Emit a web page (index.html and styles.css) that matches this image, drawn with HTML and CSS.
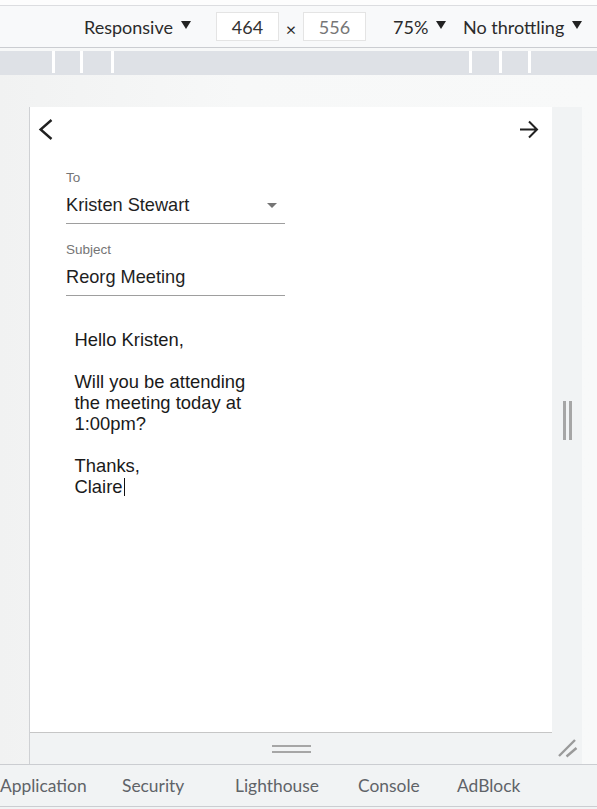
FILE: index.html
```html
<!DOCTYPE html>
<html lang="en">
<head>
<meta charset="utf-8">
<title>Device emulation</title>
<link rel="stylesheet" href="styles.css">
</head>
<body>
<div class="topline"></div>
<div class="toolbar">
  <div class="tb-item tb-mode">Responsive<span class="tri"></span></div>
  <div class="dim">464</div>
  <div class="times">×</div>
  <div class="dim dim-muted">556</div>
  <div class="tb-item tb-zoom">75%<span class="tri"></span></div>
  <div class="tb-item tb-throttle">No throttling<span class="tri"></span></div>
</div>
<div class="ruler-wrap">
  <div class="ruler">
    <span class="tick t1"></span>
    <span class="tick t2"></span>
    <span class="tick t3"></span>
    <span class="tick t4"></span>
    <span class="tick t5"></span>
    <span class="tick t6"></span>
  </div>
</div>
<div class="stage">
  <div class="frame">
    <div class="device">
      <div class="nav">
        <svg class="icon" width="24" height="24" viewBox="0 0 24 24"><polyline points="17.5,2 6.6,11.5 17.5,21" fill="none" stroke="#212121" stroke-width="2.4"/></svg>
        <svg class="icon" width="24" height="24" viewBox="0 0 24 24"><path d="M3 11.5H19.5M12 3.5L20 11.5L12 19.5" fill="none" stroke="#212121" stroke-width="2"/></svg>
      </div>
      <div class="form">
        <div class="field">
          <div class="label">To</div>
          <div class="value">Kristen Stewart<span class="select-arrow"></span></div>
        </div>
        <div class="field">
          <div class="label">Subject</div>
          <div class="value">Reorg Meeting</div>
        </div>
      </div>
      <div class="message">Hello Kristen,<br><br>Will you be attending<br>the meeting today at<br>1:00pm?<br><br>Thanks,<br>Claire<span class="caret"></span></div>
    </div>
    <div class="vstrip"><span class="grip-v"></span><span class="grip-v"></span></div>
    <div class="hstrip"><div class="grip-h-wrap"><span class="grip-h"></span><span class="grip-h"></span></div></div>
    <div class="corner">
      <svg width="30" height="31" viewBox="0 0 30 31"><path d="M7 23L23 7M14.5 23.5L24.5 15" fill="none" stroke="#9a9a9a" stroke-width="2.4"/></svg>
    </div>
  </div>
</div>
<div class="tabs">
  <div class="tab">Application</div>
  <div class="tab">Security</div>
  <div class="tab">Lighthouse</div>
  <div class="tab">Console</div>
  <div class="tab">AdBlock</div>
</div>
</body>
</html>
```
FILE: styles.css
```css
html, body {
  margin: 0;
  padding: 0;
}
body {
  width: 597px;
  height: 809px;
  overflow: hidden;
  background: #f1f3f4;
  font-family: Lato, "Open Sans", sans-serif;
}
.topline {
  height: 5px;
  background: #fdfdfd;
  border-bottom: 1px solid #dcdde0;
}
.toolbar {
  height: 41px;
  background: #f8f9fa;
  border-bottom: 1px solid #cbcdd1;
  display: flex;
  align-items: center;
  padding-left: 84px;
  font-size: 18px;
  color: #2b2b2b;
  box-sizing: content-box;
}
.tb-item {
  display: flex;
  align-items: center;
  white-space: nowrap;
}
.tb-mode { width: 132px; }
.tb-zoom { width: 70px; margin-left: 27px; }
.tri {
  display: inline-block;
  width: 0;
  height: 0;
  border-left: 5.5px solid transparent;
  border-right: 5.5px solid transparent;
  border-top: 8px solid #222;
  margin-left: 8px;
  margin-top: -3px;
}
.dim {
  width: 61px;
  height: 27px;
  background: #fff;
  border: 1px solid #e4e4e4;
  display: flex;
  align-items: center;
  justify-content: center;
  font-size: 18px;
  color: #333;
}
.dim-muted { color: #777; }
.times {
  width: 24px;
  text-align: center;
  font-size: 18px;
  padding-top: 5px;
}
.ruler-wrap {
  padding-top: 3px;
  background: #f7f8f8;
}
.ruler {
  height: 24px;
  background: #dee1e6;
  display: flex;
  align-items: flex-start;
}
.tick {
  width: 3px;
  height: 22px;
  background: #fff;
  flex: none;
}
.t1 { margin-left: 52px; }
.t2 { margin-left: 25px; }
.t3 { margin-left: 28px; }
.t4 { margin-left: 355px; }
.t5 { margin-left: 27px; }
.t6 { margin-left: 26px; }
.stage {
  height: 657px;
  padding: 32px 0 0 29px;
  background: linear-gradient(to right, #f1f2f2 0%, #f7f8f8 40%, #f8f9f9 100%);
}
.frame {
  width: 552px;
  height: 657px;
  border-left: 1px solid #cfd1d4;
  display: grid;
  grid-template-columns: 522px 30px;
  grid-template-rows: 626px 31px;
  background: #f1f3f4;
}
.device {
  background: #fff;
  border-bottom: 1px solid #c6c6c6;
  display: flex;
  flex-direction: column;
  font-family: "Liberation Sans", Arial, sans-serif;
  color: #1f1f1f;
}
.nav {
  display: flex;
  justify-content: space-between;
  padding: 11px 11px 0 4px;
  height: 24px;
}
.icon { display: block; }
.form {
  margin: 28px 0 0 36px;
  width: 219px;
  display: flex;
  flex-direction: column;
  gap: 18px;
}
.field {
  display: flex;
  flex-direction: column;
}
.label {
  font-size: 13.5px;
  line-height: 16px;
  color: #757575;
  margin-bottom: 7px;
}
.value {
  font-size: 18.2px;
  line-height: 24px;
  padding-bottom: 6px;
  border-bottom: 1px solid #9e9e9e;
  display: flex;
  justify-content: space-between;
  align-items: center;
}
.select-arrow {
  width: 0;
  height: 0;
  border-left: 5px solid transparent;
  border-right: 5px solid transparent;
  border-top: 5px solid #757575;
  margin-right: 8px;
  margin-top: 1px;
}
.message {
  margin: 33px 0 0 44.5px;
  font-size: 18.4px;
  line-height: 21px;
  color: #1a1a1a;
}
.caret {
  display: inline-block;
  width: 1.5px;
  height: 18px;
  background: #111;
  vertical-align: -3px;
  margin-left: 1px;
}
.vstrip {
  display: flex;
  justify-content: center;
  align-items: center;
  gap: 3px;
  padding-left: 1px;
}
.grip-v {
  width: 3px;
  height: 39px;
  background: #a6a6a6;
}
.hstrip {
  display: flex;
  justify-content: center;
  align-items: center;
}
.grip-h-wrap {
  display: flex;
  flex-direction: column;
  gap: 3.5px;
  margin-top: 1px;
}
.grip-h {
  width: 39px;
  height: 2.5px;
  background: #a6a6a6;
}
.corner svg { display: block; }
.tabs {
  height: 41px;
  border-top: 1px solid #cbcdd1;
  border-bottom: 1px solid #cbcdd1;
  background: #f1f3f4;
  display: grid;
  grid-template-columns: 122px 113px 123px 99px auto;
  align-items: center;
  font-size: 17.4px;
  line-height: 41px;
  color: #5f6368;
}
.tab { white-space: nowrap; }
```
